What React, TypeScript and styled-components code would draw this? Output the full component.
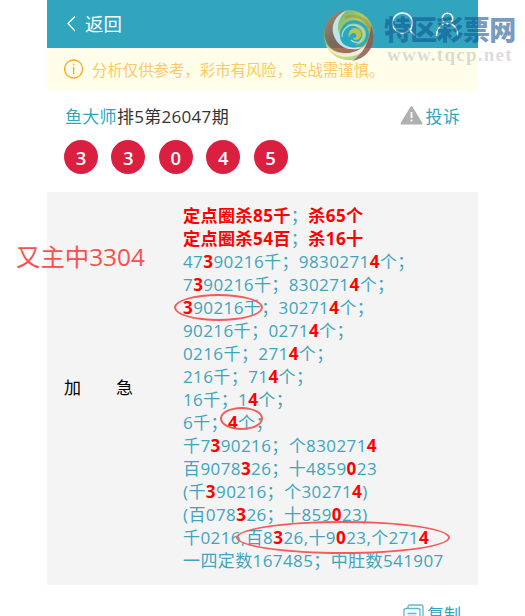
import React from 'react';
import styled, { createGlobalStyle } from 'styled-components';

const GlobalStyle = createGlobalStyle`
  * {
    box-sizing: border-box;
  }

  html, body {
    margin: 0;
    padding: 0;
    background-color: #fff;
    overflow: hidden;
  }

  body {
    font-family: 'Open Sans', 'Noto Sans CJK SC', sans-serif;
    color: #333;
  }
`;

const Page = styled.div`
  position: relative;
  width: 525px;
  height: 616px;
  padding-left: 47px;
  overflow: hidden;
`;

const Container = styled.div`
  width: 431px;
`;

const Header = styled.header`
  display: flex;
  align-items: center;
  justify-content: space-between;
  height: 48px;
  padding: 0 19px 0 18px;
  background-color: #32a5be;
  color: #fff;
`;

const BackLink = styled.div`
  display: flex;
  align-items: center;
  gap: 8px;
  font-size: 18.4px;
  line-height: 48px;
`;

const HeaderIcons = styled.div`
  display: flex;
  align-items: center;
  gap: 19px;
`;

const Notice = styled.div`
  display: flex;
  align-items: center;
  height: 43px;
  padding: 0 17px 1px;
  gap: 8px;
  background-color: #fffeeb;
  color: #fbc968;
  font-size: 15.4px;
  white-space: nowrap;
`;

const TitleRow = styled.div`
  display: flex;
  align-items: center;
  justify-content: space-between;
  height: 49px;
  padding: 0 18px 1px;
  font-size: 17px;
  letter-spacing: 0.3px;

  a {
    color: #32a5be;
  }
`;

const Report = styled.a`
  display: flex;
  align-items: center;
  gap: 2px;
`;

const Balls = styled.div`
  display: flex;
  gap: 13.4px;
  height: 52px;
  padding-left: 17px;
`;

const Ball = styled.span`
  width: 34px;
  height: 34px;
  border-radius: 50%;
  background-color: #db1f40;
  color: #fff;
  font-size: 18.5px;
  font-weight: 600;
  line-height: 35px;
  text-align: center;
`;

const Panel = styled.section`
  display: flex;
  align-items: center;
  height: 393px;
  background-color: #f4f4f4;
`;

const PanelLabel = styled.div`
  display: flex;
  justify-content: space-between;
  width: 69px;
  margin: 0 50px 0 17px;
  padding-bottom: 4px;
  color: #000;
  font-size: 17px;
`;

const Lines = styled.div`
  padding-bottom: 1px;
  color: #42a4bc;
  font-size: 17px;
  letter-spacing: 0.4px;
  line-height: 23px;
  white-space: nowrap;

  b {
    color: #ff0000;
    font-size: 17.1px;
    font-weight: 700;
    line-height: 1;
  }
`;

const CopyRow = styled.div`
  display: flex;
  align-items: center;
  justify-content: flex-end;
  gap: 3px;
  padding: 17px 17px 0 0;
  color: #32a5be;
  font-size: 17px;
  line-height: 25px;
`;

const Remark = styled.div`
  position: absolute;
  left: 16px;
  top: 240px;
  color: #fb4f4f;
  font-size: 24.4px;
  line-height: 34px;
  white-space: nowrap;
`;

const Circle = styled.div<{ $x: number; $y: number; $w: number; $h: number }>`
  position: absolute;
  left: ${(p) => p.$x}px;
  top: ${(p) => p.$y}px;
  width: ${(p) => p.$w}px;
  height: ${(p) => p.$h}px;
  border: 2px solid #f65b5a;
  border-radius: 50%;
`;

const Watermark = styled.div`
  position: absolute;
  left: 323px;
  top: 9px;
  display: flex;
  gap: 8px;
`;

const WatermarkText = styled.div`
  display: flex;
  flex-direction: column;
  padding-top: 3px;
  white-space: nowrap;

  strong {
    color: rgba(14, 80, 143, 0.58);
    font-size: 27px;
    font-weight: 900;
    letter-spacing: -0.7px;
    line-height: 36px;
  }

  span {
    padding-left: 3px;
    color: rgba(140, 140, 155, 0.33);
    font-family: 'Liberation Serif', serif;
    font-size: 19px;
    font-weight: 700;
    letter-spacing: 1.25px;
    line-height: 14px;
  }
`;

const numbers = [3, 3, 0, 4, 5];

// text between asterisks is highlighted
const lines = [
  '*定点圈杀85千*；*杀65个*',
  '*定点圈杀54百*；*杀16十*',
  '47*3*90216千；9830271*4*个；',
  '7*3*90216千；830271*4*个；',
  '*3*90216千；30271*4*个；',
  '90216千；0271*4*个；',
  '0216千；271*4*个；',
  '216千；71*4*个；',
  '16千；1*4*个；',
  '6千；*4*个；',
  '千7*3*90216；个830271*4*',
  '百9078*3*26；十4859*0*23',
  '(千*3*90216；个30271*4*)',
  '(百078*3*26；十859*0*23)',
  '千0216,百8*3*26,十9*0*23,个271*4*',
  '一四定数167485；中肚数541907',
];

const Line: React.FC<{ text: string }> = ({ text }) => (
  <div>
    {text.split('*').map((part, i) => (i % 2 ? <b key={i}>{part}</b> : part))}
  </div>
);

const Swirl: React.FC = () => (
  <svg width="53" height="54" viewBox="0 0 53 54" opacity="0.85">
    <defs>
      <linearGradient id="rim" x1="0" y1="0" x2="1" y2="1">
        <stop offset="0" stopColor="#c1866b" />
        <stop offset="0.45" stopColor="#82624f" />
        <stop offset="1" stopColor="#b5453e" />
      </linearGradient>
      <linearGradient id="leaf" x1="0" y1="0" x2="1" y2="1">
        <stop offset="0" stopColor="#4fae85" />
        <stop offset="0.45" stopColor="#c8d44b" />
        <stop offset="1" stopColor="#8d7558" />
      </linearGradient>
      <linearGradient id="base" x1="0" y1="0" x2="1" y2="0">
        <stop offset="0" stopColor="#e8dc55" />
        <stop offset="0.6" stopColor="#9fd579" />
        <stop offset="1" stopColor="#49b5c0" />
      </linearGradient>
    </defs>
    <circle cx="26" cy="26" r="25" fill="url(#leaf)" />
    <path d="M24 1C8 3-1 16 2 29c2 10 11 16 22 15 7 0 13-2 17-6-12 2-23-1-27-10C9 17 14 7 24 1Z" fill="url(#rim)" />
    <path d="M24 1C12 6 7 17 11 27c5 13 18 16 30 11-10 1-20-2-24-11C12 16 17 7 24 1Z" fill="#d9f0ee" />
    <path d="M3 36c8 9 26 12 37 2 5-4 8-9 8-15 3 9 0 18-7 23C28 55 10 51 3 36Z" fill="url(#base)" />
    <path d="M2 35c8 11 24 12 35 5 7-4 11-11 11-18 2 10-3 17-9 21C26 52 9 48 2 35Z" fill="#eee9df" />
    <path d="M48 16c7 17-1 33-19 36 11-7 18-19 19-36Z" fill="url(#rim)" />
    <path d="M17 26c0-12 12-18 21-13 8 4 10 14 5 20-5 6-13 7-19 4-5-2-7-6-7-11Z" fill="#28a9c6" />
    <path d="M23 17c7-5 18-2 20 6 1 7-4 13-11 13 6-4 9-10 5-15-3-4-9-6-14-4Z" fill="#a9d182" />
    <path d="M26 29c-2-7 4-12 9-9 4 2 4 8 1 10-3 2-6 1-6-1 3 0 4-2 3-4-2-2-6-1-7 4Z" fill="#d3c844" />
    <path d="M19 28c0-10 10-15 18-10 6 4 5 12-1 15-3 1-6 0-8-2" fill="none" stroke="#d4e8b8" strokeWidth="1.2" />
    <path d="M22 9c9-5 22 0 24 10" fill="none" stroke="#a8843f" strokeWidth="3" opacity="0.45" />
  </svg>
);

const App: React.FC = () => {
  return (
    <>
      <GlobalStyle />
      <Page>
        <Container>
          <Header>
            <BackLink>
              <svg width="12" height="18" viewBox="0 0 12 18" fill="none" stroke="#fff" strokeWidth="1.2">
                <path d="M10 1.5L3 8.5l7 7.5" />
              </svg>
              返回
            </BackLink>
            <HeaderIcons>
              <svg width="25" height="25" viewBox="0 0 25 25" fill="none" stroke="#fff" strokeWidth="1.4">
                <circle cx="11.5" cy="11" r="10" />
                <path d="M19 18.5l5 5" />
              </svg>
              <svg width="24" height="25" viewBox="0 0 24 25" fill="none" stroke="#fff" strokeWidth="1.4">
                <circle cx="12.5" cy="6.5" r="5.3" />
                <path d="M1.5 24c0-6 3.5-11 8-12.3M15.5 11.7c4 1.5 7.3 6 7.3 12.3" />
              </svg>
            </HeaderIcons>
          </Header>

          <Notice>
            <svg width="20" height="20" viewBox="0 0 20 20" fill="none" stroke="#fba71b" strokeWidth="1.3">
              <circle cx="9.6" cy="10" r="9" />
              <path d="M9.6 8v7M9.6 4.8v1.7" />
            </svg>
            分析仅供参考，彩市有风险，实战需谨慎。
          </Notice>

          <TitleRow>
            <div><a>鱼大师</a>排5第26047期</div>
            <Report>
              <svg width="23" height="20" viewBox="0 0 22 20">
                <path d="M11 2L21 18.5H1Z" fill="#b0b0b0" stroke="#b0b0b0" strokeWidth="2" strokeLinejoin="round" />
                <path d="M11 7v6M11 14.5v2" stroke="#fff" strokeWidth="1.8" />
              </svg>
              投诉
            </Report>
          </TitleRow>

          <Balls>
            {numbers.map((n, i) => (
              <Ball key={i}>{n}</Ball>
            ))}
          </Balls>

          <Panel>
            <PanelLabel>
              <span>加</span>
              <span>急</span>
            </PanelLabel>
            <Lines>
              {lines.map((text) => (
                <Line key={text} text={text} />
              ))}
            </Lines>
          </Panel>

          <CopyRow>
            <svg width="21" height="22" viewBox="0 0 21 22" fill="none" stroke="#5fb9cb" strokeWidth="1.3">
              <path d="M5 4V3q0-2 2-2h11q2 0 2 2v13q0 2-2 2h-1" />
              <rect x="1" y="4.5" width="16" height="17" rx="2" />
              <path d="M4.5 9.5h9M4.5 12.5h9M4.5 15.5h9" />
            </svg>
            复制
          </CopyRow>
        </Container>

        <Remark>又主中3304</Remark>
        <Circle $x={174} $y={294} $w={89} $h={27} />
        <Circle $x={220} $y={407} $w={43} $h={23} />
        <Circle $x={236} $y={521} $w={214} $h={33} />

        <Watermark>
          <Swirl />
          <WatermarkText>
            <strong>特区彩票网</strong>
            <span>www.tqcp.net</span>
          </WatermarkText>
        </Watermark>
      </Page>
    </>
  );
};

export default App;
